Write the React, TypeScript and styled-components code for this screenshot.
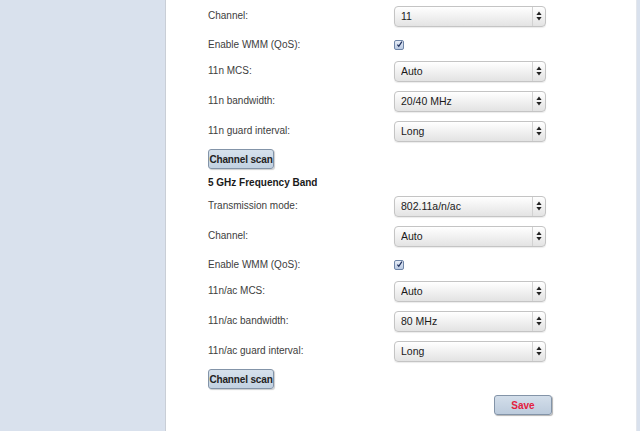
import styled, { createGlobalStyle } from 'styled-components';

const GlobalStyle = createGlobalStyle`
  html, body {
    margin: 0;
    padding: 0;
    height: 100%;
    overflow: hidden;
    background: #ffffff;
  }
  #root {
    height: 100%;
  }
`;

interface FieldType {
  label: string;
  kind: 'select' | 'check';
  value?: string;
}

const band24: FieldType[] = [
  { label: 'Channel:', kind: 'select', value: '11' },
  { label: 'Enable WMM (QoS):', kind: 'check' },
  { label: '11n MCS:', kind: 'select', value: 'Auto' },
  { label: '11n bandwidth:', kind: 'select', value: '20/40 MHz' },
  { label: '11n guard interval:', kind: 'select', value: 'Long' },
];

const band5: FieldType[] = [
  { label: 'Transmission mode:', kind: 'select', value: '802.11a/n/ac' },
  { label: 'Channel:', kind: 'select', value: 'Auto' },
  { label: 'Enable WMM (QoS):', kind: 'check' },
  { label: '11n/ac MCS:', kind: 'select', value: 'Auto' },
  { label: '11n/ac bandwidth:', kind: 'select', value: '80 MHz' },
  { label: '11n/ac guard interval:', kind: 'select', value: 'Long' },
];

const SelectBox = ({ value }: { value: string }) => (
  <SelectWrap>
    <Select value={value} onChange={() => undefined}>
      <option value={value}>{value}</option>
    </Select>
    <Arrows>
      <svg width="6" height="10" viewBox="0 0 6 10">
        <path d="M3 0.5 L5.6 4 L0.4 4 Z" fill="#222" />
        <path d="M3 9.5 L5.6 6 L0.4 6 Z" fill="#222" />
      </svg>
    </Arrows>
  </SelectWrap>
);

const CheckBox = () => (
  <Check>
    <svg width="9" height="9" viewBox="0 0 9 9">
      <path
        d="M1.8 4.6 L3.6 6.8 L7.6 0.8"
        stroke="#1d2f5c"
        strokeWidth="1.6"
        fill="none"
      />
    </svg>
  </Check>
);

const FieldRow = ({ label, kind, value }: FieldType) => (
  <Row short={kind === 'check'}>
    <Label>{label}</Label>
    {kind === 'select' ? <SelectBox value={value ?? ''} /> : <CheckBox />}
  </Row>
);

export default function App() {
  return (
    <>
      <GlobalStyle />
      <Page>
        <Sidebar />
        <Content>
          {band24.map((f, i) => (
            <FieldRow key={'a' + i} {...f} />
          ))}
          <ScanButton>Channel scan</ScanButton>
          <Heading>5 GHz Frequency Band</Heading>
          {band5.map((f, i) => (
            <FieldRow key={'b' + i} {...f} />
          ))}
          <ScanButton>Channel scan</ScanButton>
          <SaveButton>Save</SaveButton>
        </Content>
        <RightStrip />
      </Page>
    </>
  );
}

const Page = styled.div`
  display: flex;
  height: 431px;
  width: 640px;
  font-family: 'Liberation Sans', Arial, sans-serif;
  font-size: 10px;
  color: #3a3a3a;
`;

const Sidebar = styled.div`
  width: 165px;
  flex-shrink: 0;
  background: #d9e1ed;
  border-right: 1px solid #c9ced6;
`;

const RightStrip = styled.div`
  width: 3px;
  flex-shrink: 0;
  background: #d9e1ed;
  border-left: 1px solid #e4e7ec;
`;

const Content = styled.div`
  flex: 1;
  display: flex;
  flex-direction: column;
  padding-left: 42px;
  background: #ffffff;
`;

const Row = styled.div<{ short: boolean }>`
  display: flex;
  align-items: center;
  height: ${({ short }) => (short ? '21px' : '30px')};
  padding-top: ${({ short }) => (short ? '4px' : '0')};
  flex-shrink: 0;
`;

const Label = styled.div`
  width: 186px;
  flex-shrink: 0;
  color: #3d3d3d;
`;

const SelectWrap = styled.div`
  position: relative;
  width: 152px;
  height: 21px;
  margin-top: 2px;
`;

const Select = styled.select`
  appearance: none;
  -webkit-appearance: none;
  width: 100%;
  height: 100%;
  box-sizing: border-box;
  margin: 0;
  padding: 0 20px 0 6px;
  border: 1px solid #c4c4c4;
  border-radius: 4px;
  background: linear-gradient(#ffffff 0%, #f1f1f1 50%, #e3e3e3 100%);
  box-shadow: 0 1px 1px rgba(0, 0, 0, 0.08);
  font-family: 'Liberation Sans', Arial, sans-serif;
  font-size: 10.5px;
  color: #1a1a1a;
  outline: none;
`;

const Arrows = styled.div`
  position: absolute;
  top: 1px;
  right: 1px;
  bottom: 1px;
  width: 12px;
  border-left: 1px solid #d2d2d2;
  display: flex;
  align-items: center;
  justify-content: center;
  pointer-events: none;
`;

const Check = styled.div`
  width: 8px;
  height: 8px;
  border: 1px solid #6f86a8;
  border-radius: 2px;
  background: linear-gradient(#e8eef8, #b9c9e2);
  display: flex;
  align-items: center;
  justify-content: center;
  margin-top: 1px;
  svg {
    margin-top: -2px;
    margin-left: 1px;
  }
`;

const ButtonBase = styled.button`
  align-self: flex-start;
  height: 20px;
  padding: 0;
  border: 1px solid #8394a8;
  border-radius: 3px;
  font-family: 'Liberation Sans', Arial, sans-serif;
  font-size: 10px;
  font-weight: bold;
  white-space: nowrap;
  flex-shrink: 0;
`;

const ScanButton = styled(ButtonBase)`
  margin-top: 4px;
  width: 66px;
  letter-spacing: -0.15px;
  background: linear-gradient(#d6e1ec, #c2d1e1);
  box-shadow: 1px 1px 1px rgba(0, 0, 0, 0.2);
  color: #222;
`;

const Heading = styled.div`
  margin-top: 7px;
  height: 14px;
  line-height: 14px;
  font-weight: bold;
  color: #1a1a1a;
  flex-shrink: 0;
`;

const SaveButton = styled(ButtonBase)`
  margin-top: 6px;
  margin-left: 286px;
  width: 58px;
  background: linear-gradient(#d3deea, #bccbdc);
  box-shadow: 1px 1px 1px rgba(0, 0, 0, 0.3);
  color: #e3213f;
`;
